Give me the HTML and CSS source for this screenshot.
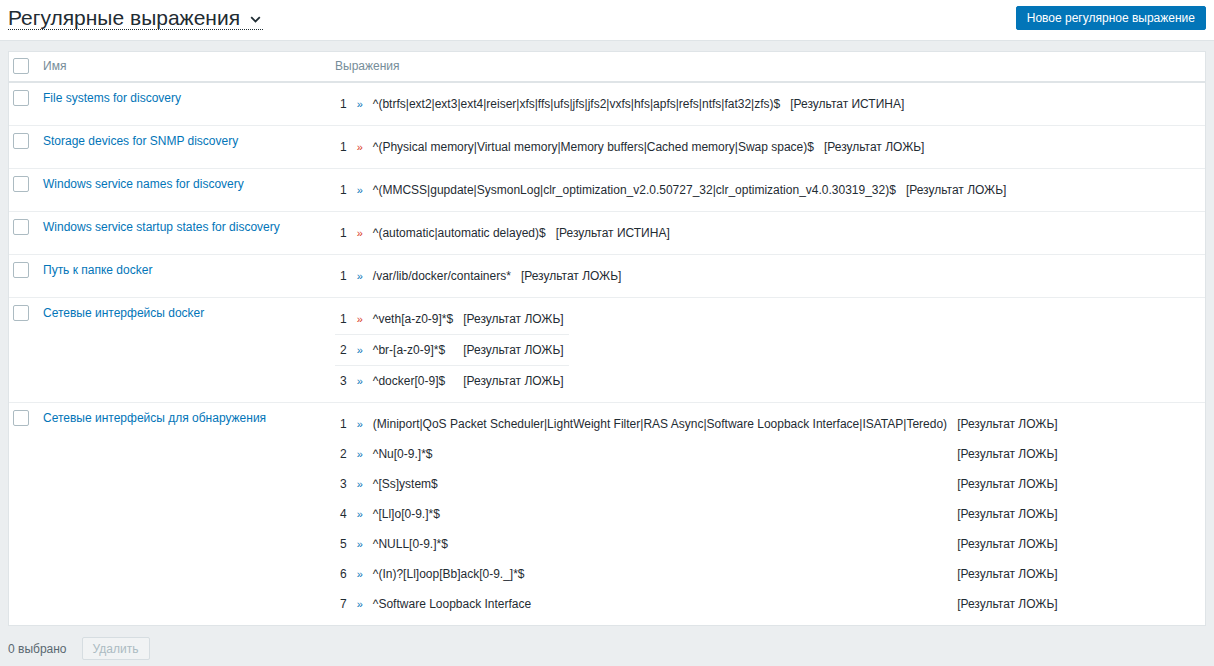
FILE: index.html
```html
<!DOCTYPE html>
<html lang="ru">
<head>
<meta charset="utf-8">
<title>Регулярные выражения</title>
<link rel="stylesheet" href="styles.css">
</head>
<body>
<header class="page-header">
  <h1 class="title">
    <span>Регулярные выражения</span>
    <svg class="chevron" width="11" height="7" viewBox="0 0 11 7"><polyline points="1.2,1.2 5.5,5.4 9.8,1.2" fill="none" stroke="#1f2c33" stroke-width="1.8"/></svg>
  </h1>
  <button class="btn-primary">Новое регулярное выражение</button>
</header>

<main class="content">
  <div class="table-box">
    <table class="list">
      <colgroup><col class="c-check"><col class="c-name"><col></colgroup>
      <thead>
        <tr>
          <th class="cell-check"><span class="checkbox"></span></th>
          <th>Имя</th>
          <th>Выражения</th>
        </tr>
      </thead>
      <tbody>
        <tr>
          <td class="cell-check"><span class="checkbox"></span></td>
          <td><a class="link" href="#">File systems for discovery</a></td>
          <td class="cell-expr">
            <table class="expr">
              <tr><td>1</td><td class="raq blue">»</td><td>^(btrfs|ext2|ext3|ext4|reiser|xfs|ffs|ufs|jfs|jfs2|vxfs|hfs|apfs|refs|ntfs|fat32|zfs)$</td><td>[Результат ИСТИНА]</td></tr>
            </table>
          </td>
        </tr>
        <tr>
          <td class="cell-check"><span class="checkbox"></span></td>
          <td><a class="link" href="#">Storage devices for SNMP discovery</a></td>
          <td class="cell-expr">
            <table class="expr">
              <tr><td>1</td><td class="raq red">»</td><td>^(Physical memory|Virtual memory|Memory buffers|Cached memory|Swap space)$</td><td>[Результат ЛОЖЬ]</td></tr>
            </table>
          </td>
        </tr>
        <tr>
          <td class="cell-check"><span class="checkbox"></span></td>
          <td><a class="link" href="#">Windows service names for discovery</a></td>
          <td class="cell-expr">
            <table class="expr">
              <tr><td>1</td><td class="raq blue">»</td><td>^(MMCSS|gupdate|SysmonLog|clr_optimization_v2.0.50727_32|clr_optimization_v4.0.30319_32)$</td><td>[Результат ЛОЖЬ]</td></tr>
            </table>
          </td>
        </tr>
        <tr>
          <td class="cell-check"><span class="checkbox"></span></td>
          <td><a class="link" href="#">Windows service startup states for discovery</a></td>
          <td class="cell-expr">
            <table class="expr">
              <tr><td>1</td><td class="raq red">»</td><td>^(automatic|automatic delayed)$</td><td>[Результат ИСТИНА]</td></tr>
            </table>
          </td>
        </tr>
        <tr>
          <td class="cell-check"><span class="checkbox"></span></td>
          <td><a class="link" href="#">Путь к папке docker</a></td>
          <td class="cell-expr">
            <table class="expr">
              <tr><td>1</td><td class="raq blue">»</td><td>/var/lib/docker/containers*</td><td>[Результат ЛОЖЬ]</td></tr>
            </table>
          </td>
        </tr>
        <tr>
          <td class="cell-check"><span class="checkbox"></span></td>
          <td><a class="link" href="#">Сетевые интерфейсы docker</a></td>
          <td class="cell-expr">
            <table class="expr lined">
              <tr><td>1</td><td class="raq red">»</td><td>^veth[a-z0-9]*$</td><td>[Результат ЛОЖЬ]</td></tr>
              <tr><td>2</td><td class="raq blue">»</td><td>^br-[a-z0-9]*$</td><td>[Результат ЛОЖЬ]</td></tr>
              <tr><td>3</td><td class="raq blue">»</td><td>^docker[0-9]$</td><td>[Результат ЛОЖЬ]</td></tr>
            </table>
          </td>
        </tr>
        <tr>
          <td class="cell-check"><span class="checkbox"></span></td>
          <td><a class="link" href="#">Сетевые интерфейсы для обнаружения</a></td>
          <td class="cell-expr">
            <table class="expr">
              <tr><td>1</td><td class="raq blue">»</td><td>(Miniport|QoS Packet Scheduler|LightWeight Filter|RAS Async|Software Loopback Interface|ISATAP|Teredo)</td><td>[Результат ЛОЖЬ]</td></tr>
              <tr><td>2</td><td class="raq blue">»</td><td>^Nu[0-9.]*$</td><td>[Результат ЛОЖЬ]</td></tr>
              <tr><td>3</td><td class="raq blue">»</td><td>^[Ss]ystem$</td><td>[Результат ЛОЖЬ]</td></tr>
              <tr><td>4</td><td class="raq blue">»</td><td>^[Ll]o[0-9.]*$</td><td>[Результат ЛОЖЬ]</td></tr>
              <tr><td>5</td><td class="raq blue">»</td><td>^NULL[0-9.]*$</td><td>[Результат ЛОЖЬ]</td></tr>
              <tr><td>6</td><td class="raq blue">»</td><td>^(In)?[Ll]oop[Bb]ack[0-9._]*$</td><td>[Результат ЛОЖЬ]</td></tr>
              <tr><td>7</td><td class="raq blue">»</td><td>^Software Loopback Interface</td><td>[Результат ЛОЖЬ]</td></tr>
            </table>
          </td>
        </tr>
      </tbody>
    </table>
  </div>

  <div class="footer-actions">
    <span class="selected-count">0 выбрано</span>
    <button class="btn-disabled" disabled>Удалить</button>
  </div>
</main>
</body>
</html>
```

FILE: styles.css
```css
* { box-sizing: border-box; }

html, body {
  margin: 0;
  padding: 0;
}

body {
  font-family: "Liberation Sans", Arial, sans-serif;
  font-size: 12px;
  color: #1f2c33;
  background: #ebeef0;
  min-height: 666px;
}

.page-header {
  background: #ffffff;
  height: 41px;
  border-bottom: 1px solid #dfe4e7;
  display: flex;
  justify-content: space-between;
  align-items: flex-start;
  padding: 6px 8px 0 8px;
}

.title {
  margin: 0;
  font-size: 21px;
  font-weight: normal;
  line-height: 23px;
  display: inline-flex;
  align-items: center;
  gap: 10px;
  padding-right: 2px;
  border-bottom: 1px dotted #1f2c33;
  color: #1f2c33;
}

.chevron {
  display: block;
  margin-top: 3px;
}

.btn-primary {
  font-family: "Liberation Sans", Arial, sans-serif;
  font-size: 12px;
  background: #0275b8;
  color: #ffffff;
  border: 1px solid #0275b8;
  border-radius: 2px;
  height: 24px;
  padding: 0 10px;
  white-space: nowrap;
  cursor: pointer;
}

.content {
  padding: 10px 8px 0 8px;
}

.table-box {
  background: #ffffff;
  border: 1px solid #dfe4e7;
}

.list {
  width: 100%;
  border-collapse: collapse;
  table-layout: fixed;
}

.c-check { width: 29px; }
.c-name { width: 292px; }

.list th,
.list > tbody > tr > td {
  padding: 6px 5px;
  line-height: 18px;
  text-align: left;
  vertical-align: top;
}

.list th {
  padding-top: 5px;
  padding-bottom: 6px;
  font-weight: normal;
  color: #768d99;
  border-bottom: 2px solid #dfe4e7;
}

.list > tbody > tr > td {
  border-bottom: 1px solid #ebeef0;
}

.list > tbody > tr:last-child > td {
  border-bottom: none;
}

.list .cell-check {
  padding-left: 4px;
  padding-right: 0;
}

.list .cell-expr {
  padding: 6px 5px;
}

.checkbox {
  display: block;
  width: 16px;
  height: 16px;
  margin-top: 1px;
  border: 1px solid #acbbc2;
  border-radius: 2px;
  background: #ffffff;
}

.link {
  color: #0275b8;
  text-decoration: none;
}

.expr {
  border-collapse: collapse;
}

.expr td {
  padding: 6px 5px;
  line-height: 18px;
  white-space: nowrap;
  vertical-align: top;
}

.expr.lined tr + tr td {
  border-top: 1px solid #ebeef0;
}

.raq {
  font-size: 11px;
}

.raq.blue { color: #0275b8; }
.raq.red { color: #d9391f; }

.footer-actions {
  display: flex;
  align-items: center;
  gap: 15px;
  padding: 11px 0;
}

.selected-count {
  color: #5a6870;
}

.btn-disabled {
  font-family: "Liberation Sans", Arial, sans-serif;
  font-size: 12px;
  height: 23px;
  width: 68px;
  background: #f1f3f4;
  color: #acbbc2;
  border: 1px solid #d6dde1;
  border-radius: 2px;
  padding: 0 10px;
}
```
